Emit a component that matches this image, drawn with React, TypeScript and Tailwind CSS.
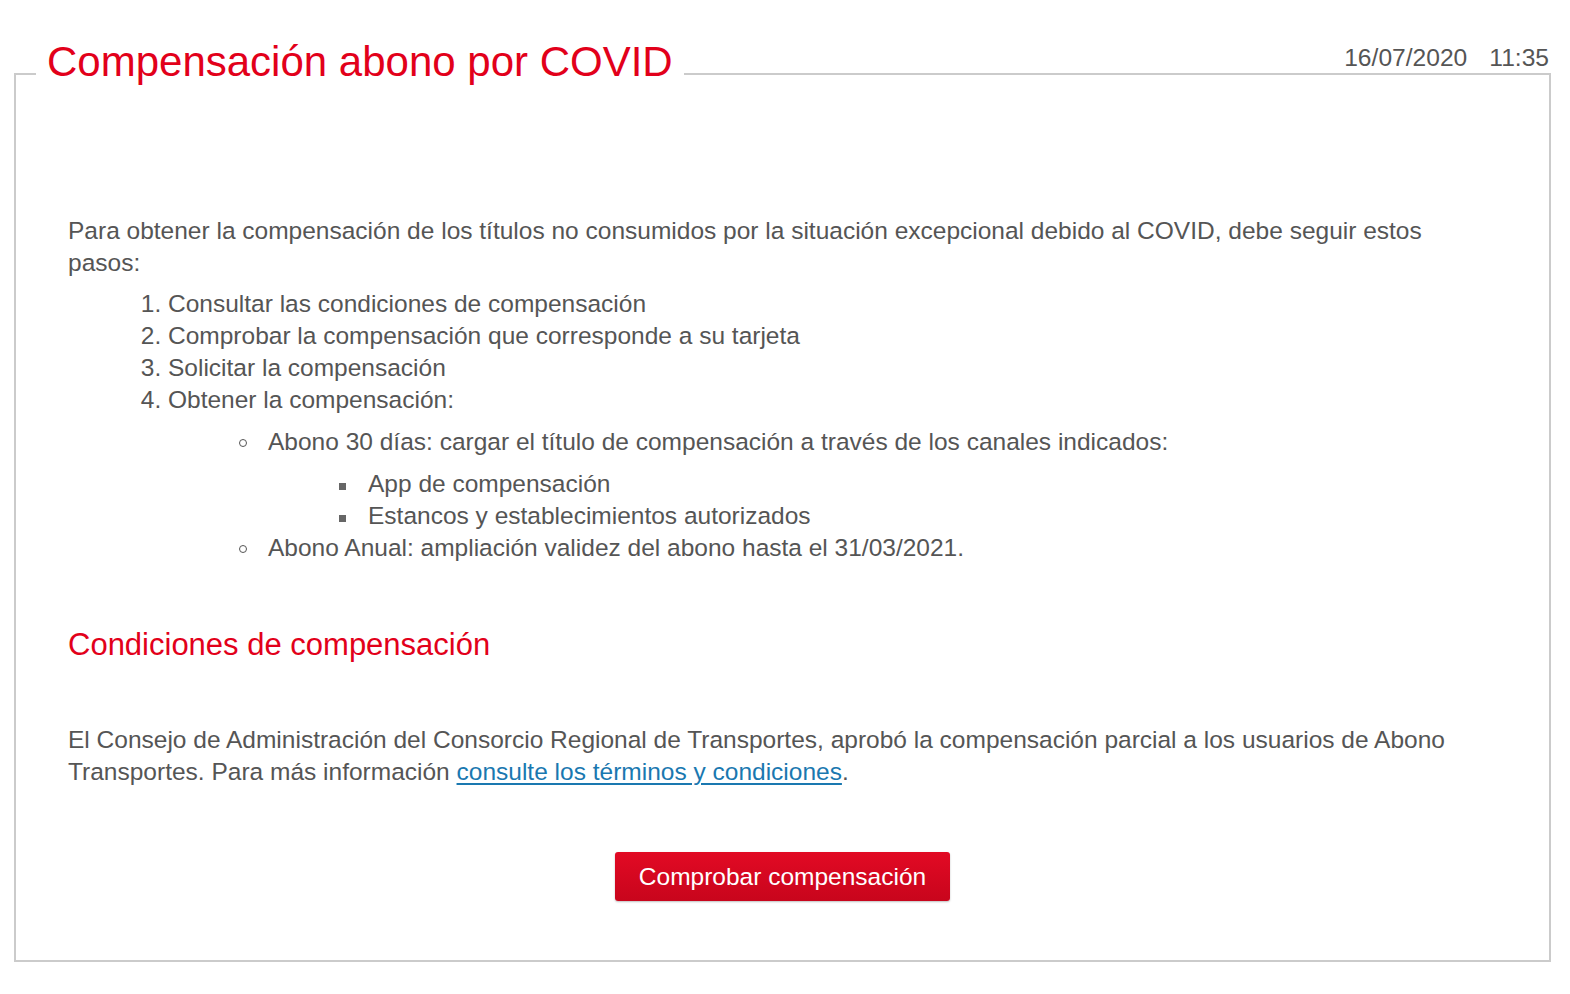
import React from "react";

const steps = [
  "Consultar las condiciones de compensación",
  "Comprobar la compensación que corresponde a su tarjeta",
  "Solicitar la compensación",
  "Obtener la compensación:",
];

const circle =
  "before:content-[''] before:inline-block before:h-[8px] before:w-[8px] before:rounded-full before:border-[1.5px] before:border-[#555] before:-ml-[29px] before:mr-[21px] before:align-[3.5px]";
const square =
  "before:content-[''] before:inline-block before:h-[7px] before:w-[7px] before:bg-[#666] before:-ml-[29px] before:mr-[22px] before:align-[2.5px]";

export default function App() {
  return (
    <div
      className="relative min-h-[994px] bg-white pt-[38px] pl-[14px] pr-[19px] pb-[34px] text-[#555]"
      style={{ fontFamily: '"Liberation Sans", Arial, sans-serif' }}
    >
      {/* fecha y hora sobre el borde */}
      <div className="absolute right-[21px] top-[46px] text-[24.6px] leading-none text-[#555]">
        16/07/2020<span className="inline-block w-[22px]" />11:35
      </div>

      <fieldset className="border-2 border-[#cbcbcb] px-[52px] pb-[59px] pt-0">
        <legend className="-ml-[32px] px-[11px] pb-[23px] text-[42px] leading-[48px] text-[#e2001a]">
          Compensación abono por COVID
        </legend>

        <div className="pt-[106px] text-[24.5px] leading-[32px]">
          <p>
            Para obtener la compensación de los títulos no consumidos por la situación excepcional debido al
            COVID, debe seguir estos pasos:
          </p>

          <ol className="mt-[9px] list-decimal pl-[100px]">
            {steps.map((s, i) => (
              <li key={s}>
                {s}
                {i === 3 && (
                  <ul className="mt-[10px] list-none pl-[100px]">
                    <li className={circle}>
                      Abono 30 días: cargar el título de compensación a través de los canales indicados:
                      <ul className="mt-[10px] list-none pl-[100px]">
                        <li className={square}>App de compensación</li>
                        <li className={square}>Estancos y establecimientos autorizados</li>
                      </ul>
                    </li>
                    <li className={circle}>Abono Anual: ampliación validez del abono hasta el 31/03/2021.</li>
                  </ul>
                )}
              </li>
            ))}
          </ol>

          <h2 className="mt-[61px] text-[31px] leading-[40px] text-[#e2001a]">Condiciones de compensación</h2>

          <p className="mt-[59px]">
            El Consejo de Administración del Consorcio Regional de Transportes, aprobó la compensación parcial a
            los usuarios de Abono Transportes. Para más información{" "}
            <a href="#" className="text-[#1a78b0] underline underline-offset-[3px]">
              consulte los términos y condiciones
            </a>
            .
          </p>

          <div className="mt-[64px] flex justify-center">
            <button className="h-[49px] w-[335px] rounded-[3px] bg-gradient-to-b from-[#e20a24] to-[#c8051c] text-[24.5px] text-white shadow-[0_1px_2px_rgba(0,0,0,0.25)]">
              Comprobar compensación
            </button>
          </div>
        </div>
      </fieldset>
    </div>
  );
}
